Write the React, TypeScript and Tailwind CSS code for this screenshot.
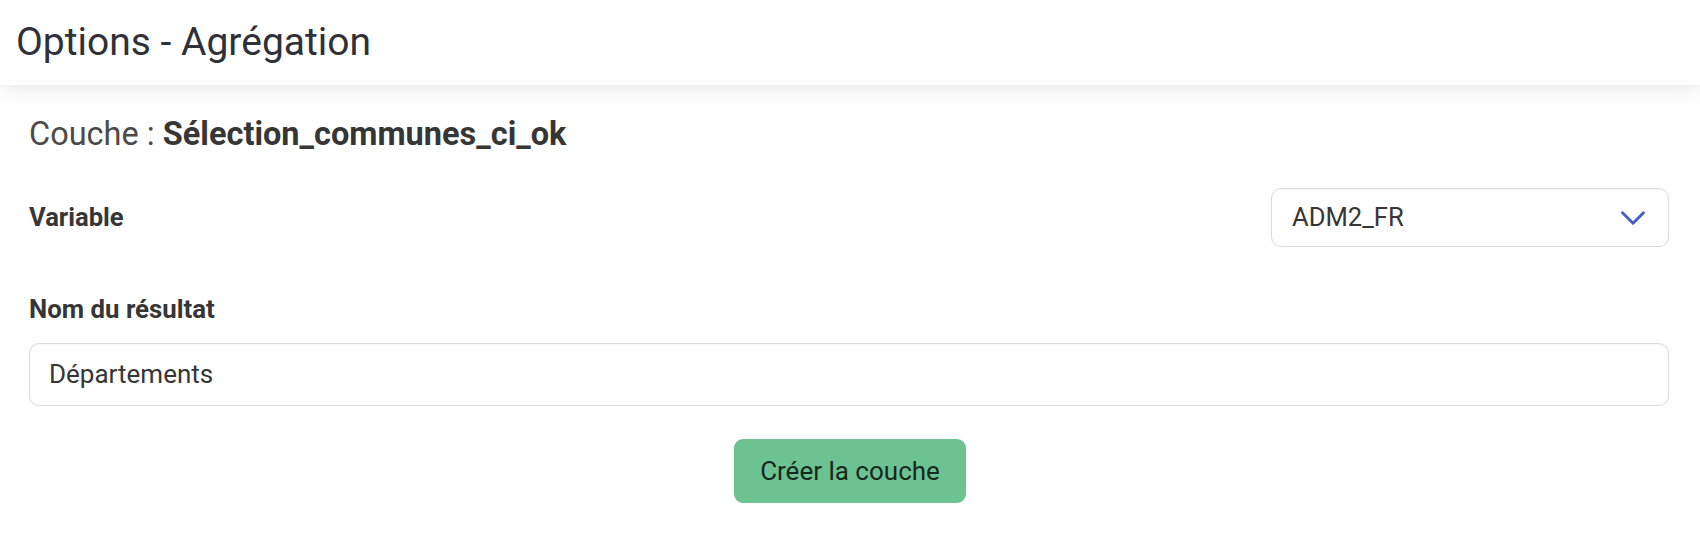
import { ChevronDown } from "lucide-react";

export default function App() {
  return (
    <div className="min-h-[546px] bg-white font-['Roboto',sans-serif] text-[#363636]">
      {/* Header */}
      <header className="relative z-10 flex h-[85px] items-center bg-white px-[16px] shadow-[0_4px_18px_rgba(0,0,0,0.09)]">
        <h1 className="text-[39px] font-normal leading-none text-[#2f3038]">Options - Agrégation</h1>
      </header>

      {/* Form */}
      <div className="pl-[29px] pr-[31px] pt-[29px]">
        <p className="text-[32.5px] leading-[40px] text-[#4a4a4a]">
          Couche : <span className="font-bold text-[#363636]">Sélection_communes_ci_ok</span>
        </p>

        <div className="mt-[34px] flex items-center justify-between">
          <label className="text-[25.6px] font-bold text-[#363636]">Variable</label>
          <div className="flex h-[59px] w-[398px] items-center justify-between rounded-[10px] border border-[#dbdbdb] bg-white pl-[20px] pr-[14px] shadow-[inset_0_1px_2px_rgba(10,10,10,0.04)]">
            <span className="text-[25.6px] text-[#363636]">ADM2_FR</span>
            <ChevronDown size={42} strokeWidth={1.7} className="text-[#485fc7]" />
          </div>
        </div>

        <label className="mt-[43px] block text-[25.8px] font-bold leading-[38px] text-[#363636]">
          Nom du résultat
        </label>
        <div className="mt-[15px] flex h-[63px] items-center rounded-[10px] border border-[#dbdbdb] bg-white px-[19px] shadow-[inset_0_1px_2px_rgba(10,10,10,0.04)]">
          <span className="text-[26px] text-[#363636]">Départements</span>
        </div>

        <div className="mt-[33px] flex justify-center pl-[2px]">
          <button className="flex h-[64px] w-[232px] items-center justify-center rounded-[9px] bg-[#6cc391] text-[26px] text-[#15291d]">
            Créer la couche
          </button>
        </div>
      </div>
    </div>
  );
}
